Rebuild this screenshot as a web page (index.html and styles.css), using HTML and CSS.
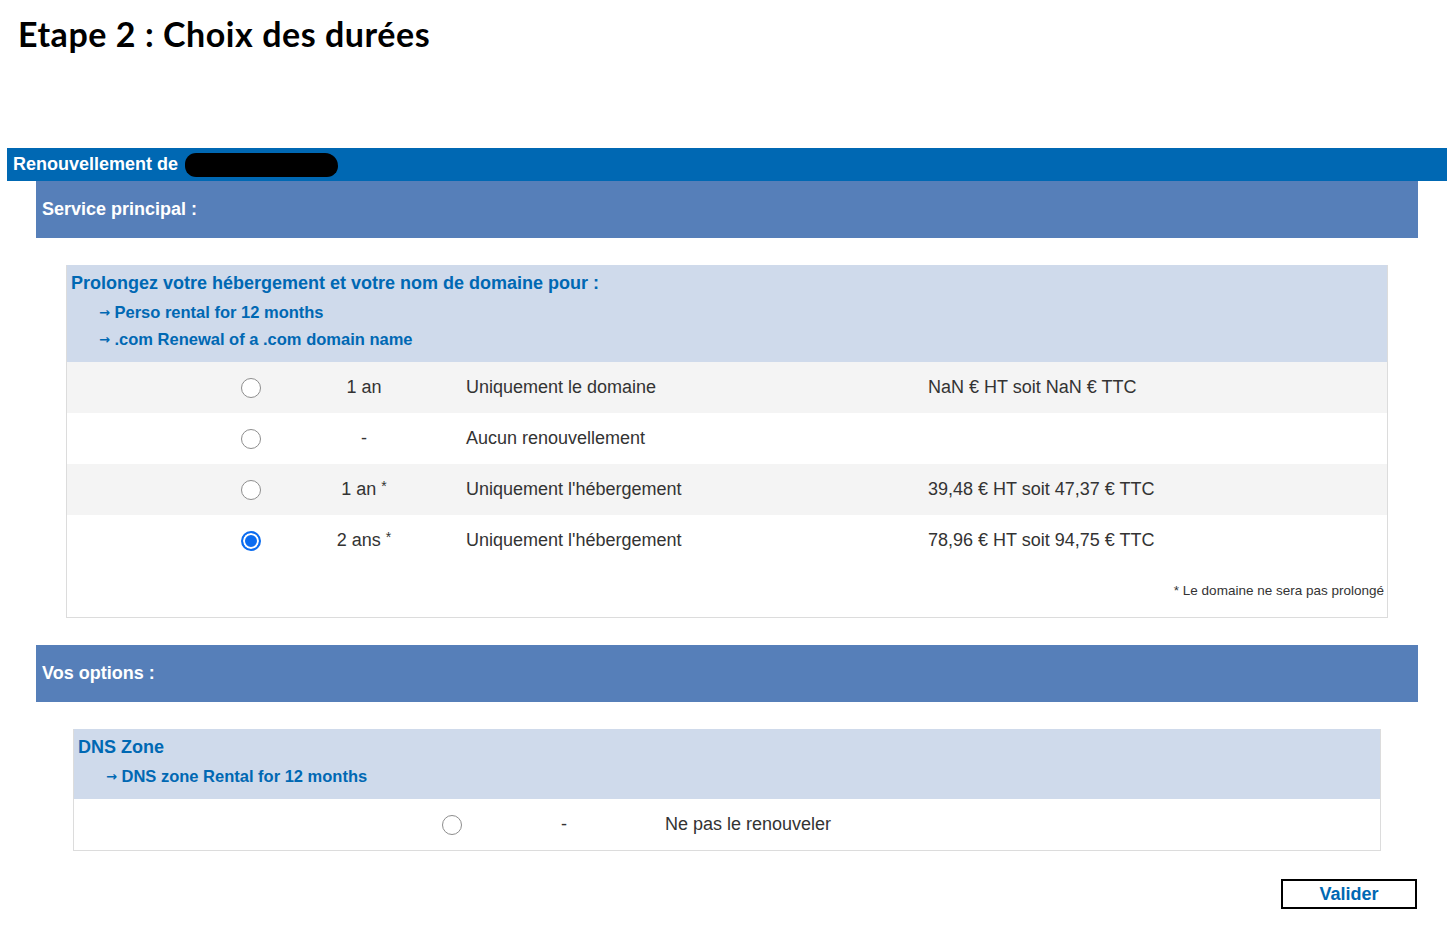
FILE: index.html
```html
<!DOCTYPE html>
<html lang="fr">

<head>
    <meta charset="UTF-8" />
    <meta name="viewport" content="width=device-width, initial-scale=1.0" />
    <title>Etape 2 : Choix des durées</title>
    <link rel="stylesheet" href="styles.css">
</head>

<body>

    <h1 class="page__title">Etape 2 : Choix des durées</h1>

    <div class="renew">
        <div class="renew__bar">Renouvellement de <span class="renew__hidden"></span></div>

        <div class="renew__inner">
            <h2 class="renew__section">Service principal :</h2>

            <div class="offer offer--main">
                <div class="offer__head">
                    <div class="offer__title">Prolongez votre hébergement et votre nom de domaine pour :</div>
                    <div class="offer__item"><span class="offer__arrow">→</span> Perso rental for 12 months</div>
                    <div class="offer__item"><span class="offer__arrow">→</span> .com Renewal of a .com domain name</div>
                </div>

                <label class="offer__row offer__row--odd">
                    <input class="offer__radio" type="radio" name="main">
                    <span class="offer__dur">1 an</span>
                    <span class="offer__desc">Uniquement le domaine</span>
                    <span class="offer__price">NaN € HT soit NaN € TTC</span>
                </label>
                <label class="offer__row">
                    <input class="offer__radio" type="radio" name="main">
                    <span class="offer__dur">-</span>
                    <span class="offer__desc">Aucun renouvellement</span>
                    <span class="offer__price"></span>
                </label>
                <label class="offer__row offer__row--odd">
                    <input class="offer__radio" type="radio" name="main">
                    <span class="offer__dur">1 an <sup>*</sup></span>
                    <span class="offer__desc">Uniquement l'hébergement</span>
                    <span class="offer__price">39,48 € HT soit 47,37 € TTC</span>
                </label>
                <label class="offer__row">
                    <input class="offer__radio" type="radio" name="main" checked>
                    <span class="offer__dur">2 ans <sup>*</sup></span>
                    <span class="offer__desc">Uniquement l'hébergement</span>
                    <span class="offer__price">78,96 € HT soit 94,75 € TTC</span>
                </label>

                <p class="offer__note">* Le domaine ne sera pas prolongé</p>
            </div>

            <h2 class="renew__section">Vos options :</h2>

            <div class="offer offer--option">
                <div class="offer__head">
                    <div class="offer__title">DNS Zone</div>
                    <div class="offer__item"><span class="offer__arrow">→</span> DNS zone Rental for 12 months</div>
                </div>

                <label class="offer__row">
                    <input class="offer__radio" type="radio" name="dns">
                    <span class="offer__dur">-</span>
                    <span class="offer__desc">Ne pas le renouveler</span>
                </label>
            </div>

            <div class="renew__actions">
                <button class="renew__submit" type="button">Valider</button>
            </div>
        </div>
    </div>

</body>

</html>
```

FILE: styles.css
```css
body {
    margin: 0 6px 0 7px;
    font-family: "Liberation Sans", Arial, sans-serif;
    color: #333;
    background: #fff;
}

.page__title {
    margin: 0;
    padding: 14px 0 0 11px;
    height: 148px;
    box-sizing: border-box;
    font-family: Lato, "DejaVu Sans", sans-serif;
    font-size: 34px;
    font-weight: bold;
    line-height: 40px;
    letter-spacing: 0.55px;
    color: #000;
}

.renew__bar {
    height: 33px;
    line-height: 33px;
    padding: 0 6px;
    background: #0068b3;
    color: #fff;
    font-size: 18px;
    font-weight: bold;
}

.renew__hidden {
    display: inline-block;
    width: 153px;
    height: 24px;
    margin-left: 2px;
    vertical-align: middle;
    background: #000;
    border-radius: 12px 14px 12px 12px;
}

.renew__inner {
    padding: 0 29px;
}

.renew__section {
    margin: 0;
    height: 57px;
    line-height: 57px;
    padding: 0 6px;
    background: #567fb9;
    color: #fff;
    font-size: 18px;
    font-weight: bold;
}

.offer {
    border: 1px solid #dcdcdc;
    border-top: 0;
    margin: 27px 30px;
}

.offer--option {
    margin: 27px 37px 28px;
}

.offer__head {
    background: #cfdaeb;
    padding: 6px 4px 9px;
    color: #0068b3;
    font-weight: bold;
}

.offer__title {
    font-size: 18px;
    line-height: 24px;
    margin-bottom: 4px;
}

.offer__item {
    font-size: 16.5px;
    line-height: 27px;
    padding-left: 28px;
}

.offer__arrow {
    font-family: "DejaVu Sans", sans-serif;
    font-size: 13px;
    line-height: 0;
    position: relative;
    top: -1px;
}

.offer__row {
    display: grid;
    grid-template-columns: 100px 126px 501px 1fr;
    align-items: center;
    height: 51px;
    padding-left: 134px;
    font-size: 18px;
}

.offer__row--odd {
    background: #f4f4f4;
}

.offer--option .offer__row {
    padding-left: 328px;
    grid-template-columns: 100px 124px 1fr;
}

.offer__radio {
    appearance: none;
    justify-self: center;
    width: 20px;
    height: 20px;
    margin: 0;
    border: 1px solid #8d8d8d;
    border-radius: 50%;
    background: #fff;
}

.offer__radio:checked {
    border: 2px solid #0b6cf0;
    background: #0b6cf0;
    box-shadow: inset 0 0 0 2px #fff;
}

.offer__dur {
    text-align: center;
}

.offer__dur sup {
    font-size: 14px;
    vertical-align: 4px;
    line-height: 0;
}

.offer__desc {
    padding-left: 39px;
}

.offer__note {
    margin: 0;
    padding: 17px 3px 18px 0;
    text-align: right;
    font-size: 13.5px;
    line-height: 16px;
}

.renew__actions {
    display: flex;
    justify-content: flex-end;
    margin-right: 1px;
}

.renew__submit {
    width: 136px;
    height: 30px;
    border: 2px solid #000;
    background: #fff;
    color: #0068b3;
    font-family: "Liberation Sans", Arial, sans-serif;
    font-size: 18px;
    font-weight: bold;
    cursor: pointer;
}
```
